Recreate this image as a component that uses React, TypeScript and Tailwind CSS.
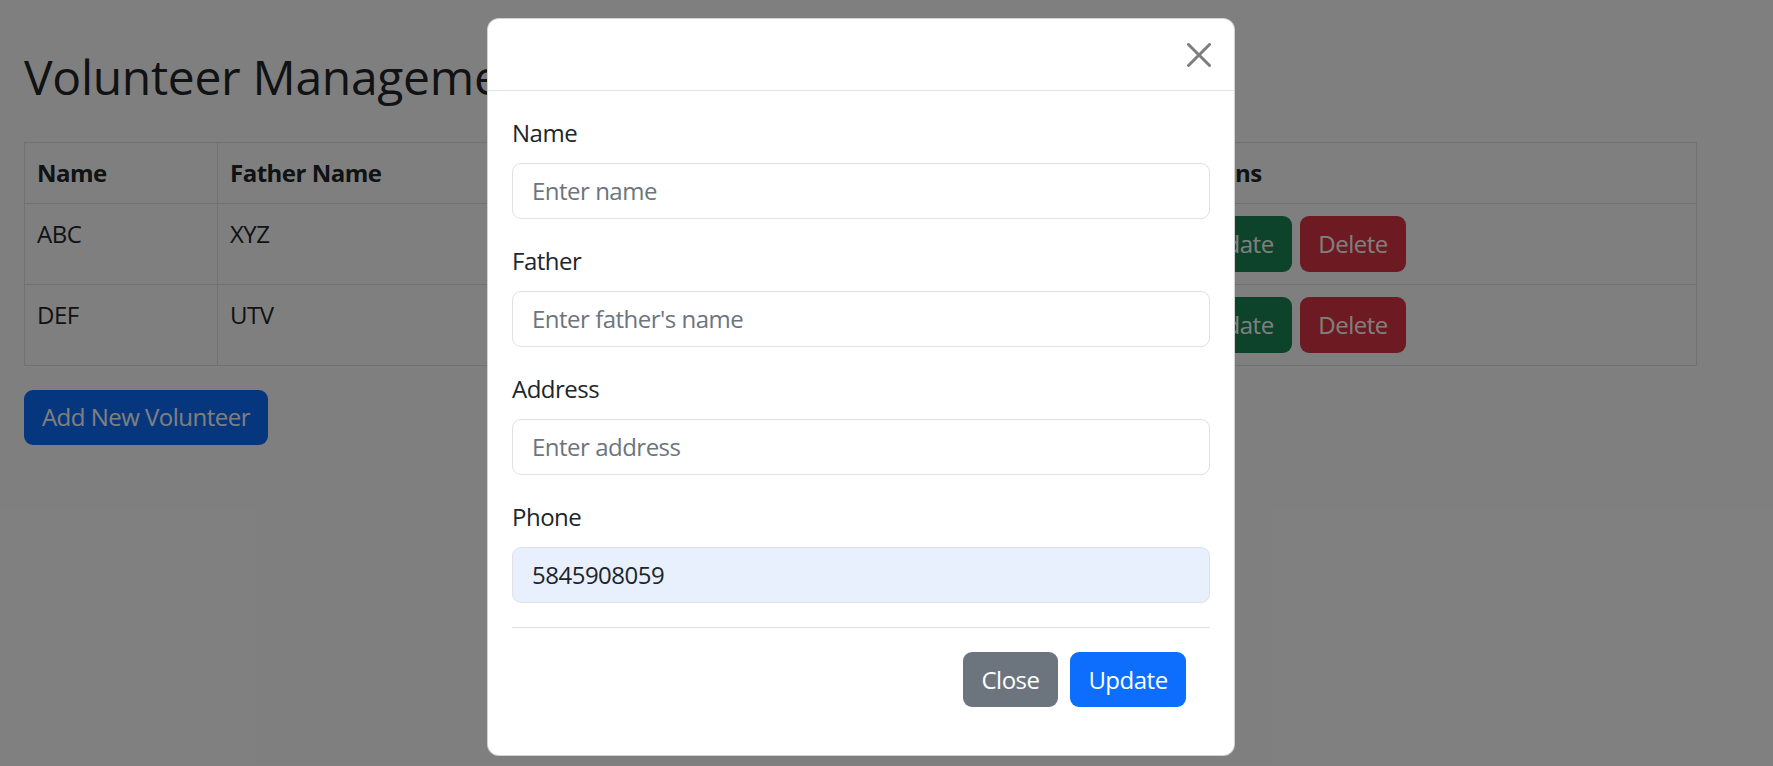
import React from 'react';

interface Volunteer {
  name: string;
  father: string;
  address: string;
  phone: string;
}

const volunteers: Volunteer[] = [
  { name: 'ABC', father: 'XYZ', address: 'Lahore', phone: '5845908059' },
  { name: 'DEF', father: 'UTV', address: 'Karachi', phone: '3214567890' },
];

const fields = [
  { label: 'Name', placeholder: 'Enter name', value: '' },
  { label: 'Father', placeholder: "Enter father's name", value: '' },
  { label: 'Address', placeholder: 'Enter address', value: '' },
  { label: 'Phone', placeholder: 'Enter phone', value: '5845908059' },
];

const CloseIcon: React.FC = () => (
  <svg width="24" height="24" viewBox="0 0 16 16" fill="#000" className="opacity-50">
    <path d="M.293.293a1 1 0 0 1 1.414 0L8 6.586 14.293.293a1 1 0 1 1 1.414 1.414L9.414 8l6.293 6.293a1 1 0 0 1-1.414 1.414L8 9.414l-6.293 6.293a1 1 0 0 1-1.414-1.414L6.586 8 .293 1.707a1 1 0 0 1 0-1.414z" />
  </svg>
);

const App: React.FC = () => {
  return (
    <div className="relative w-[1773px] h-[766px] overflow-hidden bg-white text-[#212529] font-['Open_Sans',sans-serif] text-[24px] leading-[36px] tracking-[-0.5px]">
      {/* Page */}
      <div className="pl-[24px] pt-[48px]">
        <h2 className="text-[48px] leading-[57.6px] font-medium mb-[36px] tracking-[-0.3px]">Volunteer Management</h2>

        <table className="w-[1673px] border-collapse border border-[#dee2e6]">
          <thead>
            <tr>
              <th className="w-[193px] text-left align-top font-bold px-[12px] py-[12px] border border-[#dee2e6]">Name</th>
              <th className="w-[330px] text-left align-top font-bold px-[12px] py-[12px] border border-[#dee2e6]">Father Name</th>
              <th className="w-[316px] text-left align-top font-bold px-[12px] py-[12px] border border-[#dee2e6]">Address</th>
              <th className="w-[300px] text-left align-top font-bold px-[12px] py-[12px] border border-[#dee2e6]">Phone</th>
              <th className="text-left align-top font-bold px-[12px] py-[12px] border border-[#dee2e6]">Actions</th>
            </tr>
          </thead>
          <tbody>
            {volunteers.map((v) => (
              <tr key={v.name}>
                <td className="align-top px-[12px] py-[12px] border border-[#dee2e6]">{v.name}</td>
                <td className="align-top px-[12px] py-[12px] border border-[#dee2e6]">{v.father}</td>
                <td className="align-top px-[12px] py-[12px] border border-[#dee2e6]">{v.address}</td>
                <td className="align-top px-[12px] py-[12px] border border-[#dee2e6]">{v.phone}</td>
                <td className="align-top px-[12px] py-[12px] border border-[#dee2e6]">
                  <div className="flex gap-[8px]">
                    <button className="w-[116px] h-[56px] rounded-[9px] bg-[#198754] text-white">Update</button>
                    <button className="w-[106px] h-[56px] rounded-[9px] bg-[#dc3545] text-white">Delete</button>
                  </div>
                </td>
              </tr>
            ))}
          </tbody>
        </table>

        <button className="mt-[24px] w-[244px] h-[55px] rounded-[9px] bg-[#0d6efd] text-white">Add New Volunteer</button>
      </div>

      {/* Modal backdrop + dialog */}
      <div className="absolute inset-0 bg-black/50">
        <div className="ml-[487px] mt-[18px] w-[748px] bg-white rounded-[12px] border border-black/[0.175]">
          <div className="h-[72px] flex items-center justify-end pr-[23px] border-b border-[#dee2e6]">
            <button className="w-[24px] h-[24px] flex items-center justify-center">
              <CloseIcon />
            </button>
          </div>

          <div className="p-[24px]">
            {fields.map((f) => (
              <div key={f.label} className="mb-[24px]">
                <label className="block mb-[12px]">{f.label}</label>
                <div
                  className={`h-[56px] flex items-center px-[19px] rounded-[9px] border border-[#dee2e6] ${
                    f.value ? 'bg-[#e8f0fe] text-[#212529]' : 'bg-white text-[#6c757d]'
                  }`}
                >
                  {f.value || f.placeholder}
                </div>
              </div>
            ))}

            <div className="flex justify-end gap-[12px] pt-[24px] pb-[24px] pr-[24px] border-t border-[#dee2e6]">
              <button className="w-[95px] h-[55px] rounded-[9px] bg-[#6c757d] text-white">Close</button>
              <button className="w-[116px] h-[55px] rounded-[9px] bg-[#0d6efd] text-white">Update</button>
            </div>
          </div>
        </div>
      </div>
    </div>
  );
};

export default App;
